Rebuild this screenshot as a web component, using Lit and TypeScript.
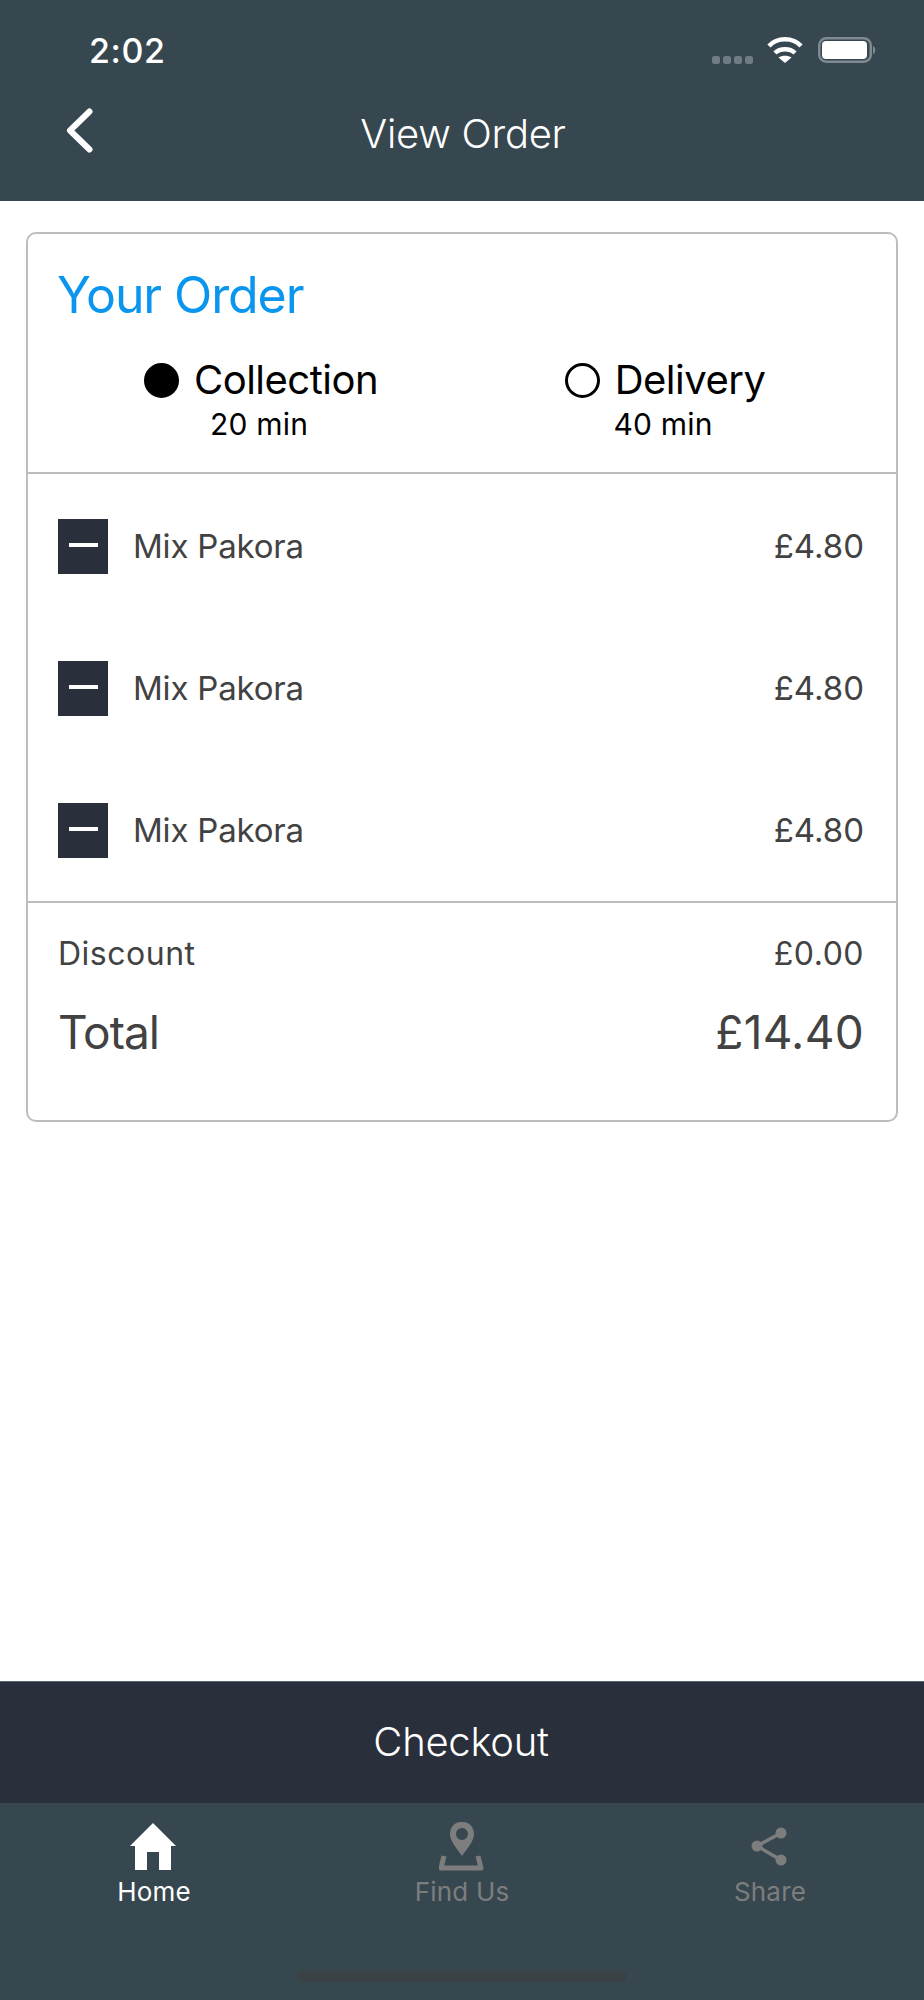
import { LitElement, html, css } from "lit";
import { customElement } from "lit/decorators.js";

@customElement("app-root")
export class AppRoot extends LitElement {
  static styles = css`
    :host { display: block; width: 924px; height: 2000px; font-family: Inter, "Liberation Sans", sans-serif; background: #fff; }
    * { box-sizing: border-box; }
    .page { height: 2000px; display: flex; flex-direction: column; }
    .top { height: 201px; background: #37474f; color: #fff; flex: none; position: relative; }
    .status { height: 100px; display: flex; align-items: center; justify-content: space-between; padding: 0 47px 0 89px; }
    .time { font-size: 34px; font-weight: 500; letter-spacing: 0.6px; }
    .nav { display: flex; align-items: center; justify-content: center; height: 66px; padding-left: 2px; font-size: 40px; font-weight: 300; letter-spacing: -0.3px; position: relative; }
    .back { position: absolute; left: 64px; top: 8px; }
    .content { flex: 1; padding: 31px 26px 0 26px; }
    .card { border: 2px solid #bdbdbd; border-radius: 10px; height: 890px; display: flex; flex-direction: column; }
    .head { height: 240px; flex: none; border-bottom: 2px solid #bdbdbd; padding: 31px 30px 0 30px; }
    .title { font-size: 50px; line-height: 60px; color: #0a96ee; font-weight: 400; letter-spacing: -1.1px; margin-left: -1px; }
    .choices { display: flex; margin-top: 31px; color: #000; }
    .choice { flex: 1; display: flex; flex-direction: column; align-items: center; }
    .choice-row { display: flex; align-items: center; gap: 15px; padding-left: 2px; font-size: 40px; line-height: 48px; letter-spacing: -0.5px; }
    .dot { width: 35px; height: 35px; border-radius: 50%; border: 3px solid #000; }
    .dot.on { background: #000; }
    .sub { font-size: 30px; line-height: 36px; margin-top: 2px; margin-left: -2px; letter-spacing: 0.2px; }
    .items { height: 429px; flex: none; border-bottom: 2px solid #bdbdbd; padding: 45px 32px 0 30px; display: flex; flex-direction: column; gap: 87px; }
    .item { height: 55px; display: flex; align-items: center; font-size: 33px; line-height: 52px; color: #424242; letter-spacing: -0.2px; }
    .minus { width: 50px; height: 55px; background: #2a303b; margin-right: 25px; display: flex; align-items: center; justify-content: center; padding-bottom: 4px; }
    .minus i { display: block; width: 29px; height: 4px; background: #fff; }
    .price { margin-left: auto; letter-spacing: 0; margin-top: -2px; }
    .item-name { margin-top: -2px; }
    .totals { padding: 29px 32px 0 30px; color: #424242; }
    .row { display: flex; justify-content: space-between; align-items: center; }
    .discount { font-size: 32px; line-height: 44px; letter-spacing: 0.5px; }
    .total { font-size: 46px; line-height: 60px; margin-top: 26px; }
    .total-label { letter-spacing: -1px; }
    .total-price { letter-spacing: 0.3px; }
    .checkout { height: 122px; flex: none; background: #2a303b; border-top: 1px solid #5b6470; color: #fff; display: flex; align-items: center; justify-content: center; font-size: 40px; font-weight: 300; letter-spacing: -0.3px; padding-bottom: 3px; padding-right: 2px; }
    .tabs { height: 197px; flex: none; background: #37474f; display: flex; position: relative; }
    .tab { flex: 1; display: flex; flex-direction: column; align-items: center; color: #7d7d7d; font-size: 26px; padding-top: 18px; }
    .tab.active { color: #fff; }
    .tab svg { display: block; height: 50px; }
    .tab span { margin-top: 5px; line-height: 32px; letter-spacing: 0.2px; }
    .home-bar { position: absolute; left: 297px; bottom: 18px; width: 330px; height: 11px; border-radius: 5px; background: #3b4246; }
  `;

  private item() {
    return html`<div class="item"><div class="minus"><i></i></div><span class="item-name">Mix Pakora</span><span class="price">£4.80</span></div>`;
  }

  render() {
    return html`<div class="page">
      <div class="top">
        <div class="status">
          <div class="time">2:02</div>
          <svg width="165" height="34" viewBox="0 0 165 34">
            <g fill="#6f7c83"><rect x="0" y="23" width="8" height="8" rx="2.5"/><rect x="11" y="23" width="8" height="8" rx="2.5"/><rect x="22" y="23" width="8" height="8" rx="2.5"/><rect x="33" y="23" width="8" height="8" rx="2.5"/></g>
            <g fill="none" stroke="#fff" stroke-width="4.5"><path d="M57 13 C 65 4, 81 4, 89 13"/><path d="M63 20 C 68 15, 78 15, 83 20"/></g>
            <path d="M73 30 L66.5 24.5 C 70 22, 76 22, 79.5 24.5 Z" fill="#fff"/>
            <rect x="107.25" y="5.25" width="51.5" height="23.5" rx="7" fill="none" stroke="#7f8b91" stroke-width="2.5"/>
            <rect x="110" y="8" width="45" height="18" rx="4" fill="#fff"/>
            <path d="M161 13 C 164 14,164 20,161 21 Z" fill="#7f8b91"/>
          </svg>
        </div>
        <div class="nav">
          <svg class="back" width="32" height="48" viewBox="0 0 32 48" fill="none" stroke="#fff" stroke-width="6" stroke-linecap="round" stroke-linejoin="round"><path d="M25.5 3.5 L6 22.5 L25.5 41.5"/></svg>
          View Order
        </div>
      </div>
      <div class="content">
        <div class="card">
          <div class="head">
            <div class="title">Your Order</div>
            <div class="choices">
              <div class="choice"><div class="choice-row"><div class="dot on"></div>Collection</div><div class="sub">20 min</div></div>
              <div class="choice"><div class="choice-row"><div class="dot"></div>Delivery</div><div class="sub">40 min</div></div>
            </div>
          </div>
          <div class="items">${this.item()}${this.item()}${this.item()}</div>
          <div class="totals">
            <div class="row discount"><span>Discount</span><span>£0.00</span></div>
            <div class="row total"><span class="total-label">Total</span><span class="total-price">£14.40</span></div>
          </div>
        </div>
      </div>
      <div class="checkout">Checkout</div>
      <div class="tabs">
        <div class="tab active">
          <svg width="48" height="50" viewBox="0 0 48 50"><path fill="#fff" d="M23 2 L46 25 H41 V49 H29 V31 H17 V49 H5 V25 H0 Z"/></svg>
          <span>Home</span>
        </div>
        <div class="tab">
          <svg width="46" height="50" viewBox="0 0 46 50"><path fill="#7d7d7d" fill-rule="evenodd" d="M23 1 C 33 1 35 9 35 13 C 35 20 28 28 23 35 C 18 28 11 20 11 13 C 11 9 13 1 23 1 Z M23 7 A 6 6 0 1 0 23 19 A 6 6 0 1 0 23 7 Z"/><path fill="none" stroke="#7d7d7d" stroke-width="5" stroke-linejoin="round" d="M5 35 L2 47 H42 L39 35"/></svg>
          <span>Find Us</span>
        </div>
        <div class="tab">
          <svg width="38" height="50" viewBox="0 0 38 50" fill="#7d7d7d"><circle cx="30" cy="12" r="5.5"/><circle cx="6" cy="25" r="5.5"/><circle cx="30" cy="39" r="5.5"/><path d="M30 12 L6 25 L30 39" fill="none" stroke="#7d7d7d" stroke-width="3.5"/></svg>
          <span>Share</span>
        </div>
        <div class="home-bar"></div>
      </div>
    </div>`;
  }
}
